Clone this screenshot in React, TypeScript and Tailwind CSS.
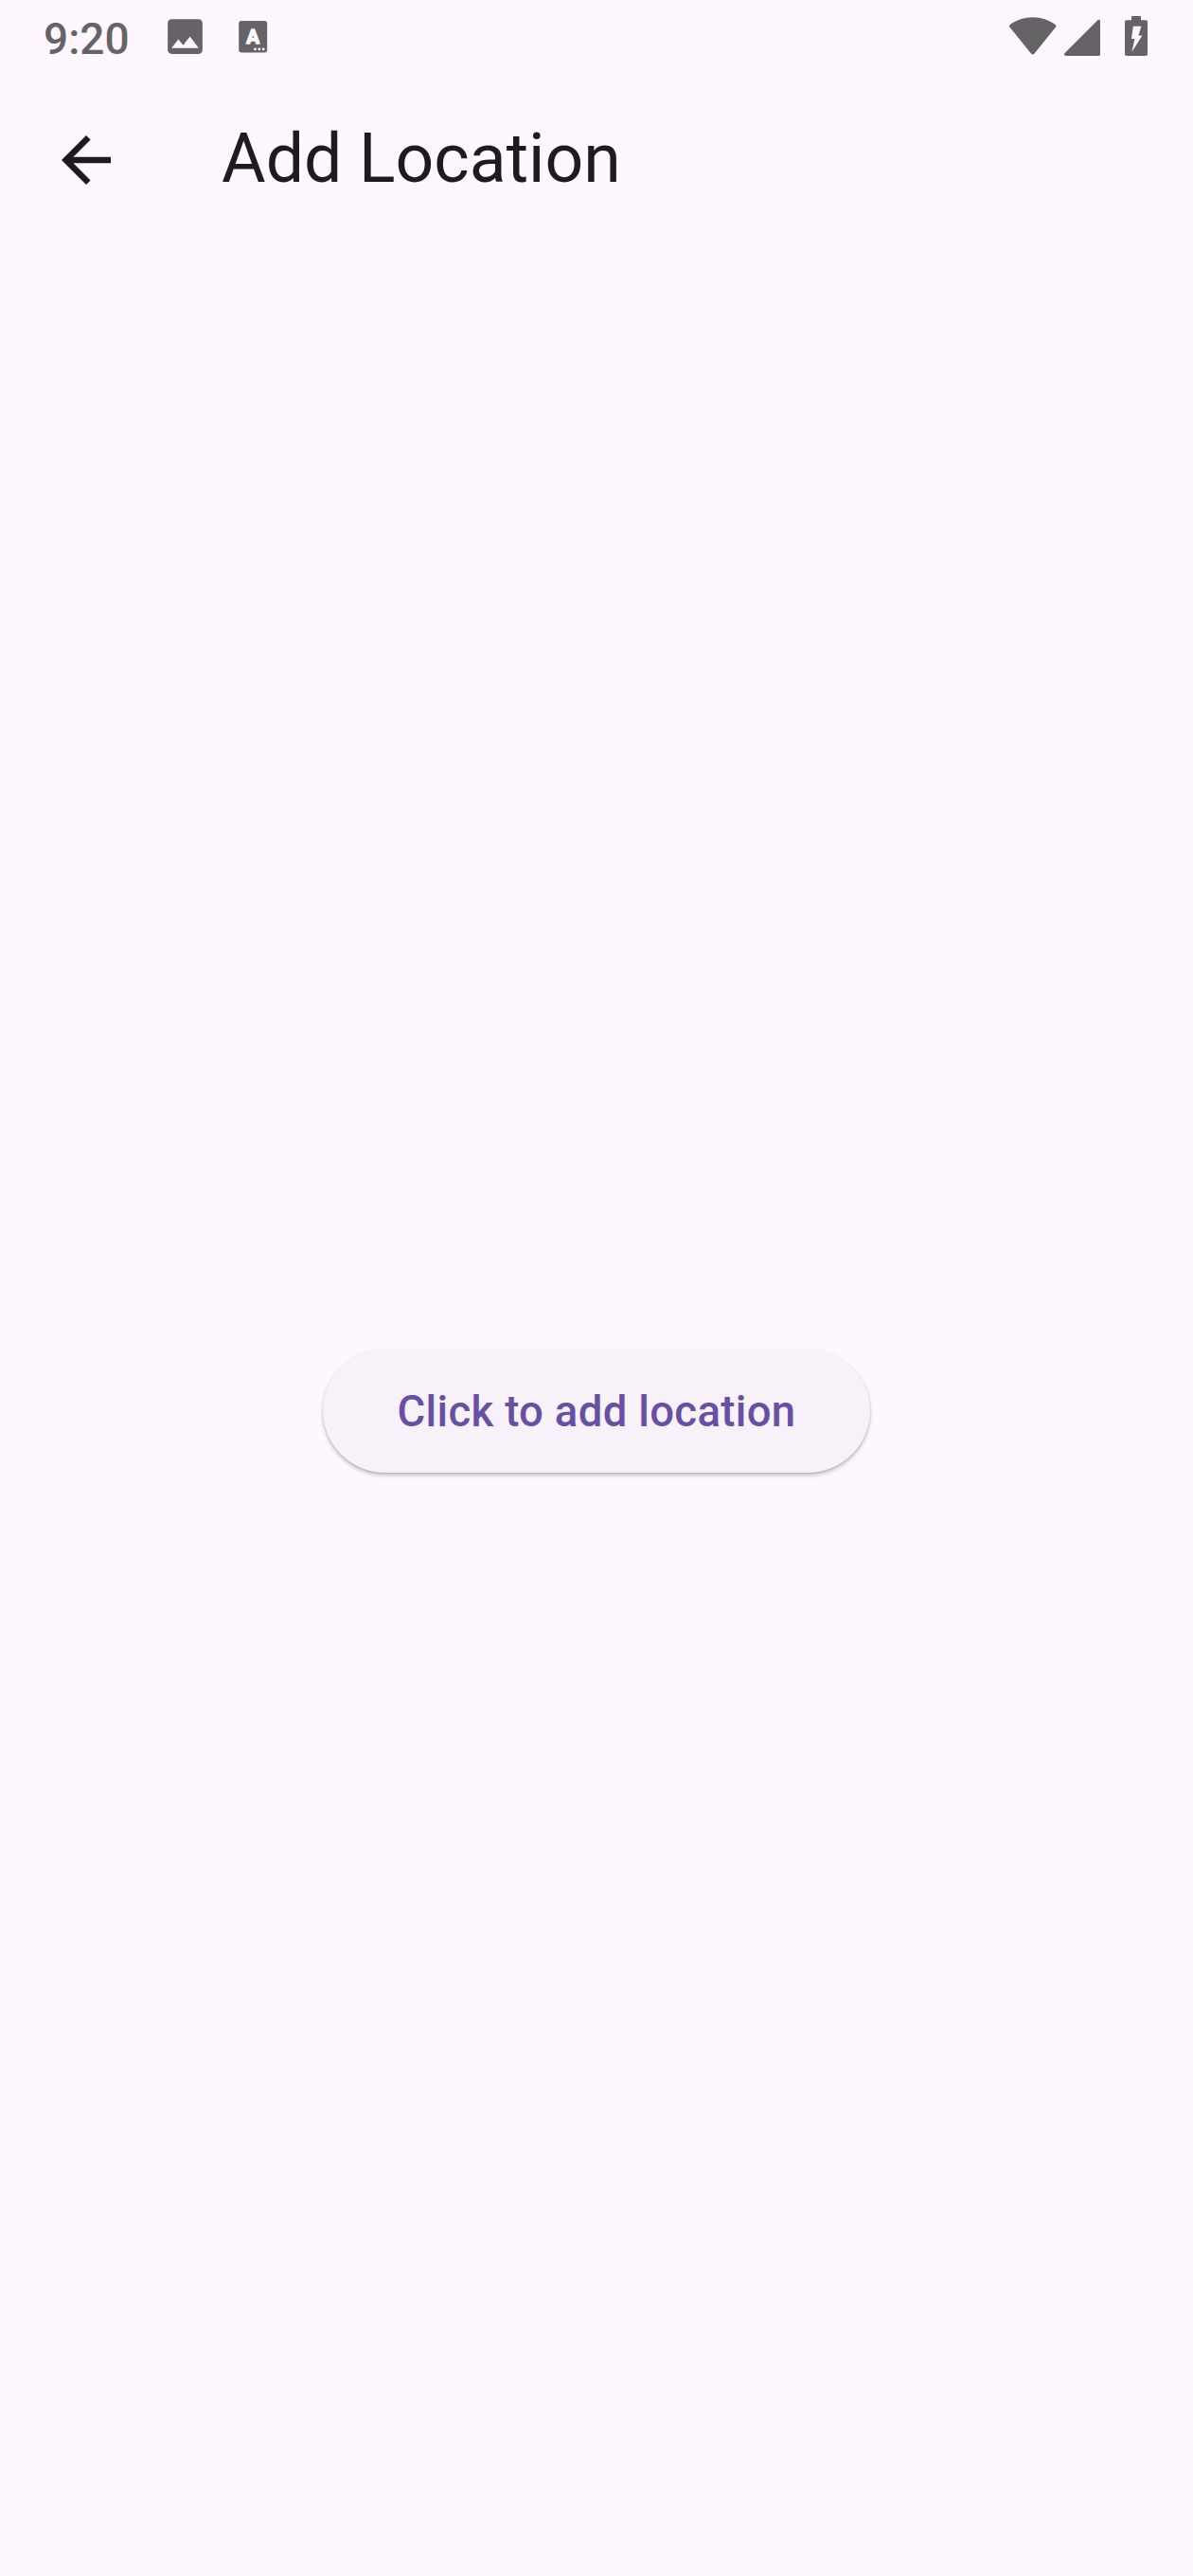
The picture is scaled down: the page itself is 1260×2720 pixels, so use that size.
function ImageIcon() {
  return (
    <svg className="ml-[33px] mt-[14.4px] size-[49px]" viewBox="0 0 24 24" fill="currentColor">
      <path d="M21 19V5c0-1.1-.9-2-2-2H5c-1.1 0-2 .9-2 2v14c0 1.1.9 2 2 2h14c1.1 0 2-.9 2-2zM8.5 13.5l2.5 3.01L14.5 12l4.5 6H5l3.5-4.5z" />
    </svg>
  );
}

function KeyboardIcon() {
  return (
    <svg className="ml-[32px] mt-[22px] h-[34px] w-[31px]" viewBox="0 0 31 34" fill="currentColor">
      <rect x="0.2" y="0" width="30" height="33.6" rx="3" />
      <text
        x="15.2"
        y="23.6"
        textAnchor="middle"
        fontFamily="Roboto, sans-serif"
        fontSize="20.5"
        fontWeight="700"
        fill="#fef7ff"
        stroke="#fef7ff"
        strokeWidth="1.4"
        strokeLinejoin="round"
      >
        A
      </text>
      <g fill="#fef7ff">
        <circle cx="17.4" cy="29.9" r="1.4" />
        <circle cx="21.8" cy="29.9" r="1.4" />
        <circle cx="26.2" cy="29.9" r="1.4" />
      </g>
    </svg>
  );
}

function WifiIcon() {
  return (
    <svg className="ml-auto mt-[18px] h-[40px] w-[50px]" viewBox="0 0 50 40" fill="currentColor">
      <path d="M24.7 0.2C15.6 0.2 7.4 3.1 0.8 8C-0.1 8.7 -0.2 9.9 0.5 10.8L23.1 38.8C23.9 39.8 25.5 39.8 26.3 38.8L48.9 10.8C49.6 9.9 49.5 8.7 48.6 8C42 3.1 33.8 0.2 24.7 0.2Z" />
    </svg>
  );
}

function SignalIcon() {
  return (
    <svg className="ml-[8px] mt-[20px] h-[39px] w-[38px]" viewBox="0 0 38 39" fill="currentColor">
      <path d="M1.8 39H36.4Q38 39 38 37.4V2.2Q38 0.8 36.6 0.8Q36 0.8 35.4 1.3L0.6 36.1Q0 36.7 0 37.3Q0 39 1.8 39Z" />
    </svg>
  );
}

function BatteryIcon() {
  return (
    <svg className="ml-[26px] mt-[17px] h-[42px] w-[24px]" viewBox="0 0 24 42" fill="currentColor">
      <path d="M7 0H17V4.2H22Q24 4.2 24 6.2V40Q24 42 22 42H2Q0 42 0 40V6.2Q0 4.2 2 4.2H7Z" />
      <path fill="#fef7ff" d="M8.8 10.7H17.4L14.4 20.4H18.4L7.4 37.8L10.4 24.1H7Z" />
    </svg>
  );
}

export default function App() {
  return (
    <div className="flex h-[2720px] w-[1260px] flex-col overflow-hidden bg-[#fef7ff] font-['Roboto',sans-serif]">
      <div className="flex h-[78px] items-start pr-[48px] pl-[46px] text-[#666366]">
        <span className="mt-[14px] w-[91.5px] text-[46px] leading-[54px] font-medium whitespace-nowrap">9:20</span>
        <ImageIcon />
        <KeyboardIcon />
        <WifiIcon />
        <SignalIcon />
        <BatteryIcon />
      </div>
      <header className="flex h-[182px] items-center pl-[52px] text-[#1d1b20]">
        <button aria-label="Back" className="mr-[104px] flex">
          <svg className="size-[78px]" viewBox="0 0 24 24" fill="currentColor">
            <path d="M20 11H7.83l5.59-5.59L12 4l-8 8 8 8 1.41-1.41L7.83 13H20v-2z" />
          </svg>
        </button>
        <h1 className="mb-[3px] text-[71.5px] leading-[91px] whitespace-nowrap">Add Location</h1>
      </header>
      <main className="flex flex-1 items-center justify-center">
        <button className="mb-px flex h-[131px] w-[578px] items-center justify-center rounded-full bg-[#f7f2fa] pt-[3px] text-[45.5px] font-medium tracking-[0.325px] whitespace-nowrap text-[#6750a4] shadow-[0_3px_4px_rgba(0,0,0,0.2),0_1px_2px_rgba(0,0,0,0.14)]">
          Click to add location
        </button>
      </main>
    </div>
  );
}
